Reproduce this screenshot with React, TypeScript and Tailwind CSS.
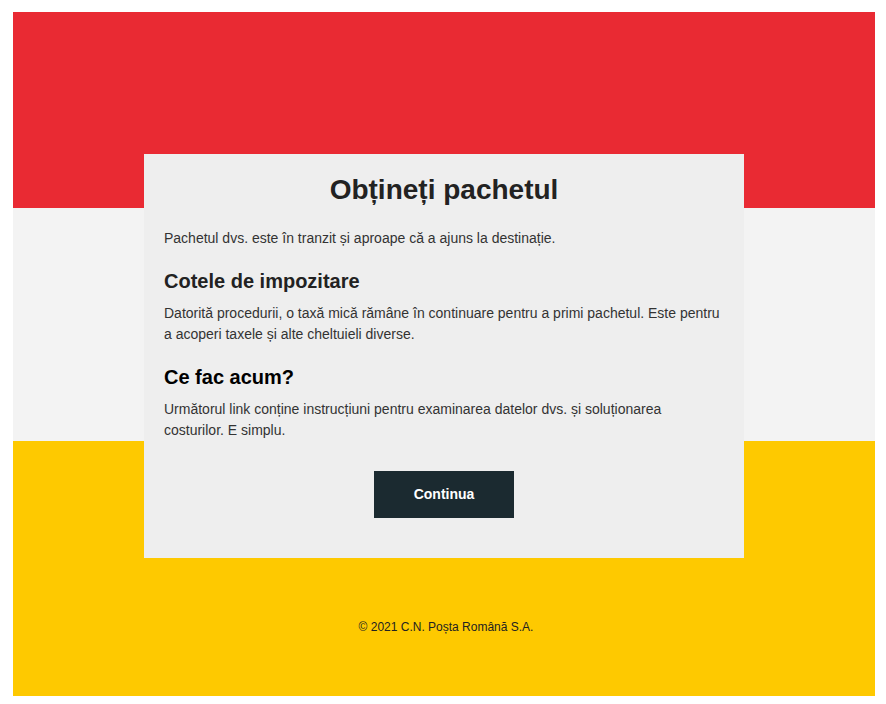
export default function App() {
  return (
    <div className="min-h-[704px] bg-white pl-[13px] pr-[11px] pt-[12px] pb-[8px] font-['Liberation_Sans',Arial,sans-serif]">
      <div className="bg-[linear-gradient(to_bottom,#e92a33_0px,#e92a33_196px,#f3f3f3_196px,#f3f3f3_429px,#fec900_429px)] pt-[142px] pb-[61px]">
        <div className="mx-auto w-[600px] bg-[#eeeeee] px-5 pt-5 pb-10">
          <h1 className="text-center text-[28px] font-bold leading-[32px] text-[#222]">
            Obțineți pachetul
          </h1>
          <p className="mt-[22px] text-[14px] leading-[21px] text-[#333]">
            Pachetul dvs. este în tranzit și aproape că a ajuns la destinație.
          </p>
          <h2 className="mt-5 text-[20px] font-bold leading-[24px] text-[#222]">
            Cotele de impozitare
          </h2>
          <p className="mt-[10px] text-[14px] leading-[21px] text-[#333]">
            Datorită procedurii, o taxă mică rămâne în continuare pentru a primi
            pachetul. Este pentru a acoperi taxele și alte cheltuieli diverse.
          </p>
          <h2 className="mt-5 text-[20px] font-bold leading-[24px] text-black">
            Ce fac acum?
          </h2>
          <p className="mt-[10px] text-[14px] leading-[21px] text-[#333]">
            Următorul link conține instrucțiuni pentru examinarea datelor dvs. și
            soluționarea costurilor. E simplu.
          </p>
          <div className="mt-[30px] flex justify-center">
            <a
              href="#"
              className="flex h-[47px] w-[140px] items-center justify-center bg-[#1b2a30] text-[14px] font-bold text-white"
            >
              Continua
            </a>
          </div>
        </div>
        <p className="mt-[61px] pl-1 text-center text-[12px] leading-[16px] text-[#222]">
          © 2021 C.N. Poșta Română S.A.
        </p>
      </div>
    </div>
  );
}
